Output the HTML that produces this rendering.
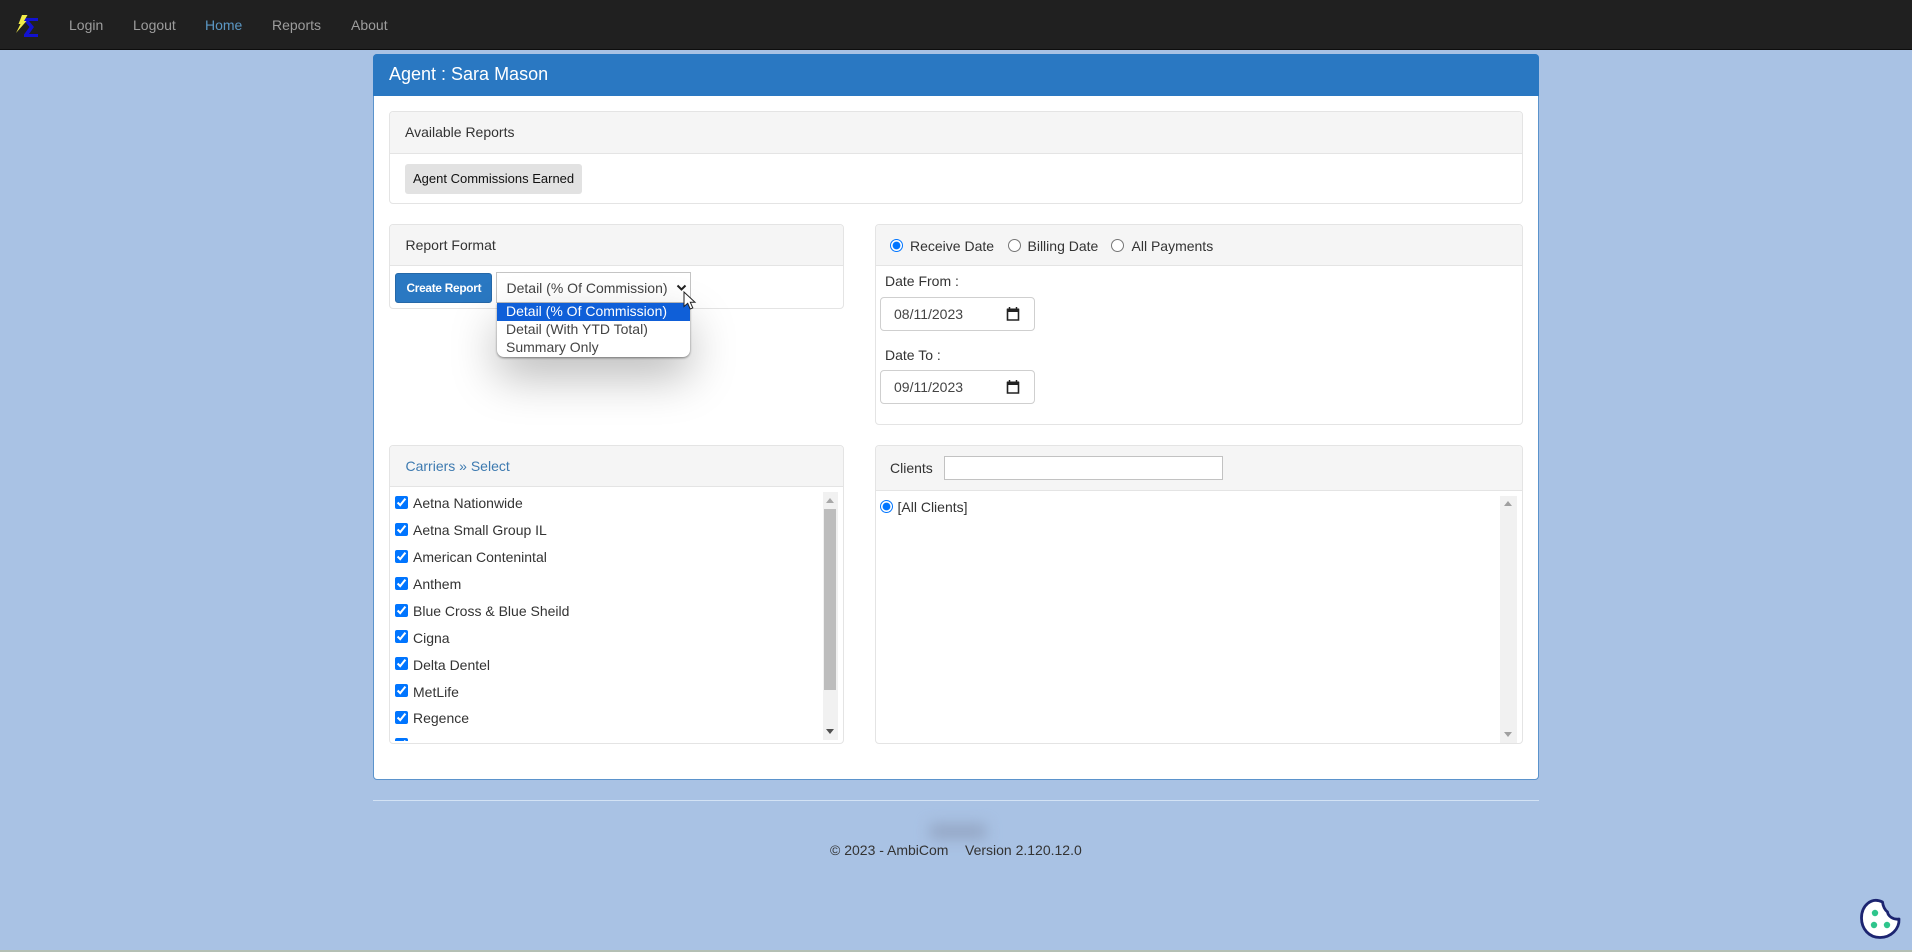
<!DOCTYPE html>
<html lang="en">
<head>
<meta charset="utf-8">
<title>Agent Reports</title>
<style>
html,body{margin:0;padding:0;width:1912px;height:952px;overflow:hidden;background:#a9c2e4;font-family:"Liberation Sans",Arial,sans-serif;font-size:14px;color:#333}
*{box-sizing:border-box}
.a{position:absolute}
.t{position:absolute;white-space:nowrap;line-height:20px;height:20px}
#nav{left:0;top:0;width:1912px;height:50px;background:#202020;border-bottom:1px solid #0d0d0d}
#nav .t{top:15px;color:#9d9d9d}
.p{position:absolute;background:#fff;border:1px solid #e4e4e4;border-radius:4px;overflow:hidden}
.h{position:absolute;left:0;top:0;right:0;background:#f5f5f5;border-bottom:1px solid #e4e4e4}
input[type=checkbox],input[type=radio]{position:absolute;margin:0;width:13px;height:13px}
.date{position:absolute;left:880px;width:155px;background:#fff;border:1px solid #cfcfcf;border-radius:4px}
.date span{position:absolute;left:13px;top:6px;line-height:20px;color:#444}
.date svg{position:absolute;left:125px;top:8px}
.sb{position:absolute;background:#f1f1f1}
</style>
</head>
<body>
<div id="nav" class="a">
  <svg class="a" style="left:14px;top:13px" width="26" height="25" viewBox="0 0 26 25">
    <path d="M10 5H24V8H15L20 14L15 21H24V24H10V21.5L15.500 14L10 7.500Z" fill="#1212d0"/>
    <path d="M8 2H13.500L10 8H12.500L2 20L6.500 11H4.500Z" fill="#f2ec48"/>
  </svg>
  <span class="t" style="left:69px">Login</span>
  <span class="t" style="left:133px">Logout</span>
  <span class="t" style="left:205px;color:#5b97c4">Home</span>
  <span class="t" style="left:272px">Reports</span>
  <span class="t" style="left:351px">About</span>
</div>

<div class="a" style="left:373px;top:54px;width:1166px;height:726px;background:#fff;border:1px solid #5b93cc;border-radius:4px"></div>
<div class="a" style="left:373px;top:54px;width:1166px;height:42px;background:#2a78c2;border-radius:4px 4px 0 0"></div>
<span class="t" style="left:389px;top:64px;color:#fff;font-size:18px">Agent : Sara Mason</span>

<div class="p" style="left:389px;top:111px;width:1134px;height:93px"><div class="h" style="height:42px"></div></div>
<span class="t" style="left:405px;top:122px">Available Reports</span>
<div class="a" style="left:405px;top:164px;width:177px;height:30px;background:#e2e2e2;border-radius:3px"></div>
<span class="t" style="left:413px;top:168.500px;color:#111;font-size:13px">Agent Commissions Earned</span>

<div class="p" style="left:389px;top:224px;width:455px;height:85px"><div class="h" style="height:41px"></div></div>
<span class="t" style="left:405.500px;top:234.500px">Report Format</span>
<div class="a" style="left:395px;top:273px;width:97px;height:30px;background:#2a78c2;border:1px solid #2568a8;border-radius:3px"></div>
<span class="t" style="left:406.500px;top:278px;color:#fff;font-size:11.800px;font-weight:bold;letter-spacing:-.25px">Create Report</span>
<div class="a" style="left:496px;top:272px;width:195px;height:31px;background:#fff;border:1px solid #c4c4c4"></div>
<span class="t" style="left:506.500px;top:277.500px;color:#444">Detail (% Of Commission)</span>
<svg class="a" style="left:676px;top:284px" width="11" height="8" viewBox="0 0 11 8"><path d="M1.500 1.500L5.500 5.500L9.500 1.500" fill="none" stroke="#222" stroke-width="2"/></svg>

<div class="a" style="left:497px;top:303px;width:193px;height:54px;background:#fff;border-radius:0 0 7px 7px;box-shadow:0 1px 2px rgba(0,0,0,.45),0 20px 46px rgba(0,0,0,.27);overflow:hidden">
  <div class="a" style="left:0;top:0;width:193px;height:18px;background:#0f5fd8"></div>
</div>
<span class="t" style="left:506px;top:301px;color:#fff">Detail (% Of Commission)</span>
<span class="t" style="left:506px;top:319px;color:#444">Detail (With YTD Total)</span>
<span class="t" style="left:506px;top:337px;color:#444">Summary Only</span>
<svg class="a" style="left:683px;top:291px;z-index:5" width="14" height="20" viewBox="0 0 14 20"><path d="M1 1V15.500L4.700 12.300L7.200 18L9.800 16.900L7.300 11.300H12Z" fill="#fff" stroke="#222" stroke-width="1"/></svg>

<div class="p" style="left:875px;top:224px;width:648px;height:201px"><div class="h" style="height:41px"></div></div>
<input type="radio" checked style="left:890px;top:239px" aria-label="Receive Date">
<span class="t" style="left:910px;top:235.500px">Receive Date</span>
<input type="radio" style="left:1008px;top:239px" aria-label="Billing Date">
<span class="t" style="left:1027.500px;top:235.500px">Billing Date</span>
<input type="radio" style="left:1111px;top:239px" aria-label="All Payments">
<span class="t" style="left:1131.500px;top:235.500px">All Payments</span>
<span class="t" style="left:885px;top:271px">Date From :</span>
<div class="date" style="top:297px;height:34px"><span>08/11/2023</span>
  <svg width="14" height="16" viewBox="0 0 14 16"><path d="M1.500 3.500H12.500V14H1.500Z" fill="none" stroke="#222" stroke-width="1.600"/><path d="M1 2.500H13V6H1Z" fill="#222"/><path d="M3.500 1V3M10.500 1V3" stroke="#222" stroke-width="1.500"/></svg></div>
<span class="t" style="left:885px;top:345px">Date To :</span>
<div class="date" style="top:370px;height:34px"><span>09/11/2023</span>
  <svg width="14" height="16" viewBox="0 0 14 16"><path d="M1.500 3.500H12.500V14H1.500Z" fill="none" stroke="#222" stroke-width="1.600"/><path d="M1 2.500H13V6H1Z" fill="#222"/><path d="M3.500 1V3M10.500 1V3" stroke="#222" stroke-width="1.500"/></svg></div>

<div class="p" style="left:389px;top:445px;width:455px;height:299px"><div class="h" style="height:41px"></div></div>
<span class="t" style="left:405.500px;top:455.500px;color:#3d7ab0">Carriers » Select</span>
<div class="a" style="left:390px;top:490px;width:432px;height:251px;overflow:hidden">
  <input type="checkbox" checked style="left:5px;top:6px" aria-label="Aetna Nationwide"><span class="t" style="left:23px;top:3px">Aetna Nationwide</span>
  <input type="checkbox" checked style="left:5px;top:33px" aria-label="Aetna Small Group IL"><span class="t" style="left:23px;top:30px">Aetna Small Group IL</span>
  <input type="checkbox" checked style="left:5px;top:60px" aria-label="American Contenintal"><span class="t" style="left:23px;top:57px">American Contenintal</span>
  <input type="checkbox" checked style="left:5px;top:86.500px" aria-label="Anthem"><span class="t" style="left:23px;top:84px">Anthem</span>
  <input type="checkbox" checked style="left:5px;top:113.500px" aria-label="Blue Cross"><span class="t" style="left:23px;top:110.500px">Blue Cross &amp; Blue Sheild</span>
  <input type="checkbox" checked style="left:5px;top:140px" aria-label="Cigna"><span class="t" style="left:23px;top:137.500px">Cigna</span>
  <input type="checkbox" checked style="left:5px;top:167px" aria-label="Delta Dentel"><span class="t" style="left:23px;top:164.500px">Delta Dentel</span>
  <input type="checkbox" checked style="left:5px;top:194px" aria-label="MetLife"><span class="t" style="left:23px;top:191.500px">MetLife</span>
  <input type="checkbox" checked style="left:5px;top:221px" aria-label="Regence"><span class="t" style="left:23px;top:218px">Regence</span>
  <input type="checkbox" checked style="left:5px;top:248px" aria-label="More">
</div>
<div class="sb" style="left:823px;top:492px;width:15px;height:248px"></div>
<div class="a" style="left:824px;top:509px;width:12px;height:181px;background:#bdbdbd"></div>
<svg class="a" style="left:826px;top:498px" width="8" height="5"><path d="M4 0L8 5H0Z" fill="#a8a8a8"/></svg>
<svg class="a" style="left:826px;top:729px" width="8" height="5"><path d="M0 0H8L4 5Z" fill="#505050"/></svg>

<div class="p" style="left:875px;top:445px;width:648px;height:299px"><div class="h" style="height:45px"></div></div>
<span class="t" style="left:890px;top:457.500px">Clients</span>
<div class="a" style="left:944px;top:456px;width:279px;height:24px;background:#fff;border:1px solid #c2c2c2"></div>
<input type="radio" checked style="left:880px;top:500px" aria-label="All Clients">
<span class="t" style="left:897.500px;top:497px">[All Clients]</span>
<div class="sb" style="left:1500px;top:496px;width:17px;height:247px"></div>
<svg class="a" style="left:1504px;top:501px" width="8" height="5"><path d="M4 0L8 5H0Z" fill="#a0a0a0"/></svg>
<svg class="a" style="left:1504px;top:732px" width="8" height="5"><path d="M0 0H8L4 5Z" fill="#a0a0a0"/></svg>

<div class="a" style="left:373px;top:800px;width:1166px;height:1px;background:#d3e2f4"></div>
<div class="a" style="left:930px;top:824px;width:56px;height:15px;background:#94a6c4;filter:blur(7px)"></div>
<span class="t" style="left:830px;top:840px">© 2023 - AmbiCom</span>
<span class="t" style="left:965px;top:840px">Version 2.120.12.0</span>

<svg class="a" style="left:1858px;top:896px" width="44" height="44" viewBox="0 0 44 44">
  <path d="M24.500 6C13 0.500 3.500 10 3.500 22C3.500 33 11 41.500 22 41.500C33 41.500 41.500 33 41 23C35 24 30 20 29.500 16C27 14 25 10 24.500 6Z" fill="#fff" stroke="#1c2470" stroke-width="2.800" stroke-linejoin="round"/>
  <circle cx="17" cy="17" r="3.200" fill="#2fc58c"/>
  <circle cx="16" cy="29" r="3.200" fill="#2fc58c"/>
  <circle cx="29" cy="29" r="3.200" fill="#2fc58c"/>
</svg>
<div class="a" style="left:0;top:950px;width:1912px;height:2px;background:#b4bfb4"></div>
</body>
</html>
